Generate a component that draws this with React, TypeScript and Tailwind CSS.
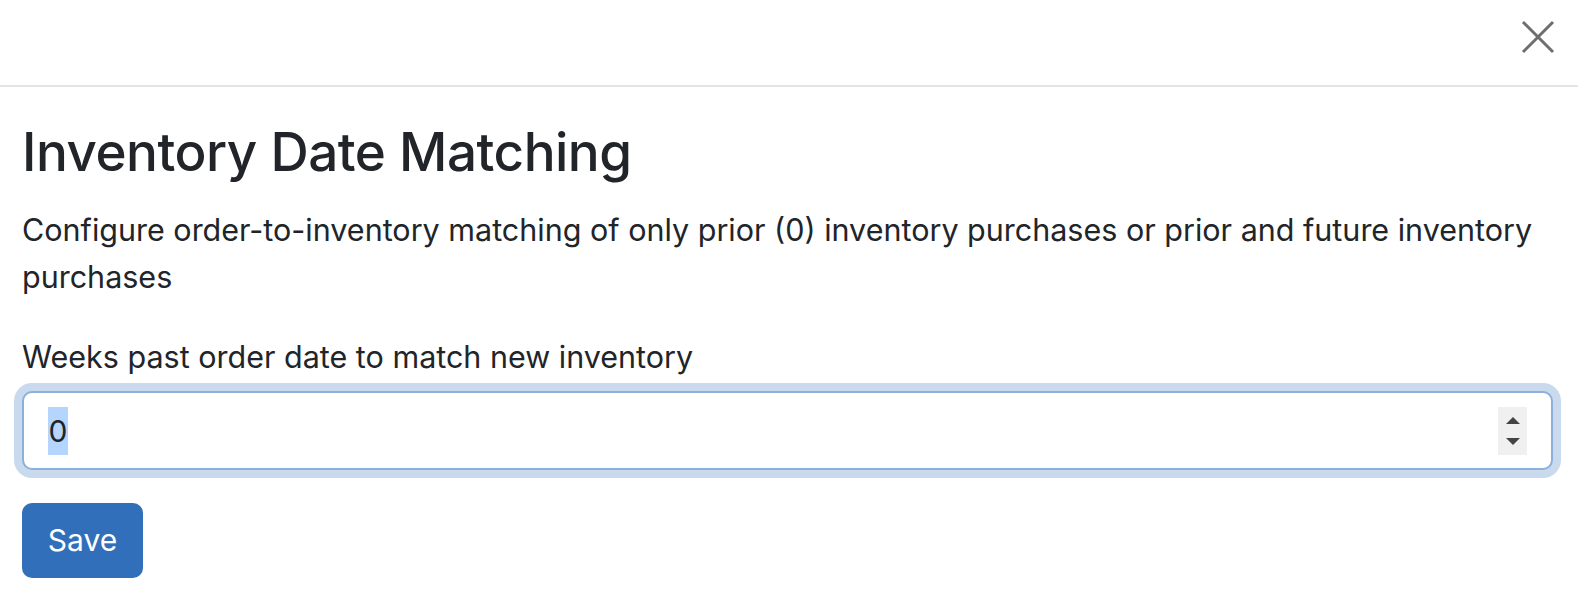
export default function App() {
    return (
        <div className="w-[1578px] h-[602px] bg-white text-[#212529] font-['Inter','Liberation_Sans',sans-serif] overflow-hidden">
            <div className="h-[87px] border-b-2 border-[#e2e4e7] flex items-start justify-end pr-[23px] pt-[20px]">
                <button className="w-[34px] h-[34px] flex items-center justify-center">
                    <svg width="34" height="34" viewBox="0 0 34 34" fill="none" stroke="#6e6e6e" strokeWidth="3">
                        <path d="M2 2L32 32M32 2L2 32" />
                    </svg>
                </button>
            </div>
            <div className="pl-[22px] pr-[25px]">
                <h1 className="text-[53px] leading-[60px] font-medium mt-[35px] tracking-[-0.5px]">Inventory Date Matching</h1>
                <p className="text-[30.5px] leading-[47px] mt-[24px]">
                    Configure order-to-inventory matching of only prior (0) inventory purchases or prior and future inventory purchases
                </p>
                <label className="block text-[30.5px] leading-[47px] mt-[33px]">Weeks past order date to match new inventory</label>
                <div className="mt-[3px] -mx-[8px] p-[8px] rounded-[18px] bg-[#c9daef]">
                    <div className="h-[79px] rounded-[10px] border-2 border-[#8cb0dc] bg-white flex items-center pl-[24px] pr-[24px]">
                        <span className="text-[30px] bg-[#b4d5fe] leading-[48px] w-[20px] text-center">0</span>
                        <div className="ml-auto w-[29px] h-[48px] bg-[#f0f0f0] flex flex-col items-center justify-center gap-[14px]">
                            <svg width="14" height="7" viewBox="0 0 14 7"><path d="M7 0L14 7H0z" fill="#444" /></svg>
                            <svg width="14" height="7" viewBox="0 0 14 7"><path d="M0 0H14L7 7z" fill="#444" /></svg>
                        </div>
                    </div>
                </div>
                <button className="mt-[25px] w-[121px] h-[75px] rounded-[10px] bg-[#316fba] text-white text-[30px]">Save</button>
            </div>
        </div>
    );
}
